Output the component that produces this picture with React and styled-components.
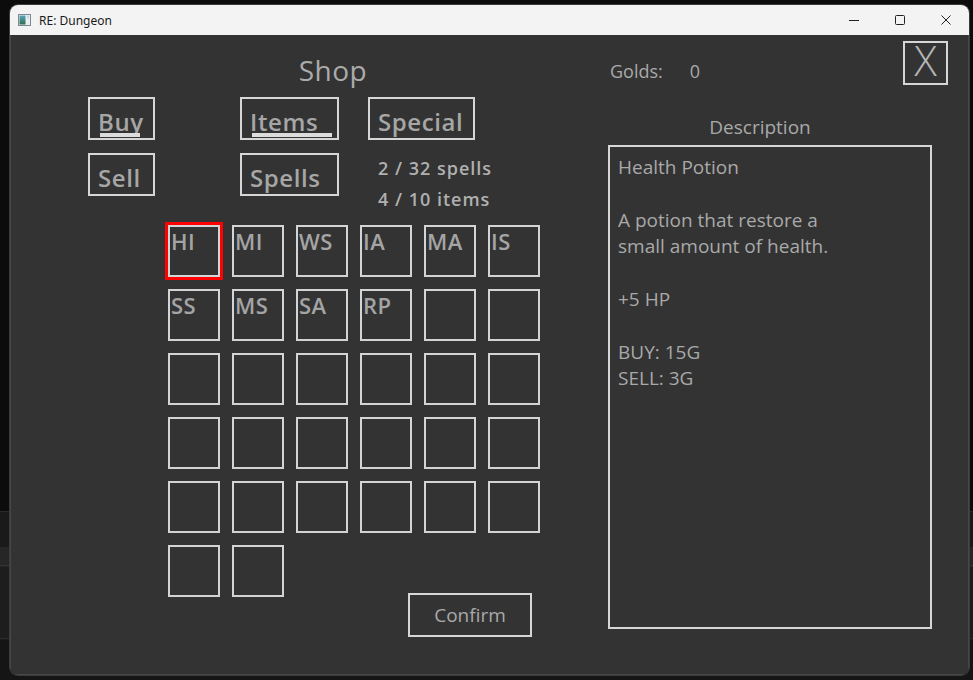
import React from 'react';
import styled, { createGlobalStyle, css } from 'styled-components';

const GlobalStyle = createGlobalStyle`
  html, body {
    margin: 0;
    padding: 0;
  }
  body {
    font-family: "Open Sans", "Noto Sans", sans-serif;
    background: linear-gradient(
      to bottom,
      #0c0c0c 0px,
      #0c0c0c 511px,
      #3a3a3a 511px,
      #1a1a1a 512px,
      #1a1a1a 547px,
      #262626 547px,
      #262626 565px,
      #3a3a3a 565px,
      #1d1d1d 567px,
      #1d1d1d 638px,
      #333 638px,
      #151515 640px
    );
  }
`;

const Screen = styled.div`
  width: 973px;
  height: 680px;
  box-sizing: border-box;
  padding: 5px 4px 5px 10px;
`;

const Window = styled.div`
  width: 959px;
  height: 670px;
  display: flex;
  flex-direction: column;
  border-radius: 8px;
  overflow: hidden;
  box-shadow: 0 0 0 1px #3c3c3c;
`;

const TitleBar = styled.div`
  height: 30px;
  flex: none;
  display: flex;
  align-items: center;
  background: #f3f3f3;
  padding-left: 8px;
`;

const WindowTitle = styled.span`
  margin-left: 8px;
  font-family: "Noto Sans", "Liberation Sans", sans-serif;
  font-size: 12px;
  color: #1a1a1a;
`;

const CaptionButtons = styled.div`
  margin-left: auto;
  display: flex;
`;

const CaptionButton = styled.div`
  width: 46px;
  height: 30px;
  display: flex;
  align-items: center;
  justify-content: center;
`;

const Body = styled.div`
  flex: 1;
  position: relative;
  display: flex;
  background: #333333;
  padding-left: 78px;
  color: #a9a9a9;
  box-shadow: inset 1px 0 0 #474747, inset -1px 0 0 #474747, inset 0 -1px 0 #474747;
`;

const LeftPane = styled.div`
  width: 510px;
  display: flex;
  flex-direction: column;
`;

const Title = styled.div`
  width: 490px;
  margin-top: 16px;
  font-size: 28px;
  line-height: 38px;
  text-align: center;
  letter-spacing: 0.5px;
  color: #ababab;
`;

const Tabs = styled.div`
  margin-top: 8px;
  display: grid;
  grid-template-columns: 152px 128px 1fr;
  grid-template-rows: 43px 43px;
  row-gap: 13px;
`;

const TabButton = styled.div`
  position: relative;
  box-sizing: border-box;
  width: ${(p) => p.$width}px;
  height: 43px;
  border: 2px solid #d6d6d6;
  padding: 7px 0 0 8px;
  font-size: 24px;
  font-weight: 600;
  letter-spacing: 0.6px;
  line-height: 32px;
  color: #a6a6a6;
  ${(p) =>
    p.$underline &&
    css`
      &::after {
        content: '';
        position: absolute;
        left: 10px;
        top: 34px;
        width: ${p.$underline}px;
        height: 4px;
        background: #dcdcdc;
      }
    `}
`;

const Stats = styled.div`
  grid-column: 3;
  grid-row: 2;
  padding-left: 10px;
  font-size: 18px;
  font-weight: 600;
  letter-spacing: 1px;
  line-height: 31px;
  color: #b0b0b0;
`;

const ItemGrid = styled.div`
  margin-top: 29px;
  margin-left: 80px;
  display: grid;
  grid-template-columns: repeat(6, 52px);
  grid-auto-rows: 52px;
  gap: 12px;
`;

const Cell = styled.div`
  box-sizing: border-box;
  border: 2px solid #d4d4d4;
  padding: 3px 0 0 1px;
  font-size: 22px;
  font-weight: 560;
  letter-spacing: 0.5px;
  line-height: 22px;
  color: #a4a4a4;
  ${(p) =>
    p.$selected &&
    css`
      outline: 3px solid #ff0000;
    `}
`;

const ConfirmButton = styled.div`
  grid-row: 6;
  grid-column: 4 / span 3;
  align-self: start;
  justify-self: start;
  margin: 48px 0 0 48px;
  box-sizing: border-box;
  width: 124px;
  height: 44px;
  border: 2px solid #d6d6d6;
  display: flex;
  align-items: center;
  justify-content: center;
  font-size: 19px;
  color: #a9a9a9;
`;

const RightPane = styled.div`
  width: 324px;
  margin-left: 10px;
  padding-top: 24px;
  display: flex;
  flex-direction: column;
`;

const GoldRow = styled.div`
  display: flex;
  gap: 27px;
  padding-left: 2px;
  font-size: 18px;
  line-height: 24px;
`;

const DescLabel = styled.div`
  width: 304px;
  margin-top: 32px;
  font-size: 19px;
  line-height: 24px;
  text-align: center;
`;

const DescBox = styled.div`
  margin-top: 6px;
  box-sizing: border-box;
  height: 484px;
  border: 2px solid #d6d6d6;
  padding: 7px 8px;
  font-size: 19px;
  line-height: 26.4px;
  white-space: pre-line;
`;

const CloseButton = styled.div`
  position: absolute;
  top: 6px;
  right: 21px;
  box-sizing: border-box;
  width: 45px;
  height: 44px;
  border: 2px solid #d6d6d6;
  display: flex;
  align-items: center;
  justify-content: center;
  padding-bottom: 6px;
  font-size: 42px;
  font-weight: 300;
  line-height: 1;
  color: #b4b4b4;
`;

const AppIcon = () => (
  <svg width="13" height="12" viewBox="0 0 13 12">
    <defs>
      <linearGradient id="ic" x1="0" y1="0" x2="0" y2="1">
        <stop offset="0" stopColor="#5aa6b8" />
        <stop offset="1" stopColor="#2f6e4e" />
      </linearGradient>
    </defs>
    <rect x="0.5" y="0.5" width="12" height="11" fill="#e8eef2" stroke="#7c8a94" />
    <rect x="1.5" y="1.5" width="6" height="9" fill="url(#ic)" />
    <rect x="9" y="1.5" width="2" height="3" fill="#cfd8dd" />
  </svg>
);

const cells = ['HI', 'MI', 'WS', 'IA', 'MA', 'IS', 'SS', 'MS', 'SA', 'RP'];
const totalCells = 32;

const description = `Health Potion

A potion that restore a
small amount of health.

+5 HP

BUY: 15G
SELL: 3G`;

export default function App() {
  const slots = Array.from({ length: totalCells }, (_, i) => cells[i] || '');
  return (
    <Screen>
      <GlobalStyle />
      <Window>
        <TitleBar>
          <AppIcon />
          <WindowTitle>RE: Dungeon</WindowTitle>
          <CaptionButtons>
            <CaptionButton>
              <svg width="10" height="10" viewBox="0 0 10 10">
                <path d="M0 5.5h10" stroke="#222" strokeWidth="1" />
              </svg>
            </CaptionButton>
            <CaptionButton>
              <svg width="10" height="10" viewBox="0 0 10 10">
                <rect x="0.5" y="0.5" width="9" height="9" rx="1" fill="none" stroke="#222" />
              </svg>
            </CaptionButton>
            <CaptionButton>
              <svg width="10" height="10" viewBox="0 0 10 10">
                <path d="M0.5 0.5l9 9M9.5 0.5l-9 9" stroke="#222" strokeWidth="1" />
              </svg>
            </CaptionButton>
          </CaptionButtons>
        </TitleBar>
        <Body>
          <LeftPane>
            <Title>Shop</Title>
            <Tabs>
              <TabButton $width={67} $underline={40}>Buy</TabButton>
              <TabButton $width={99} $underline={80}>Items</TabButton>
              <TabButton $width={107}>Special</TabButton>
              <TabButton $width={67}>Sell</TabButton>
              <TabButton $width={99}>Spells</TabButton>
              <Stats>
                2 / 32 spells
                <br />
                4 / 10 items
              </Stats>
            </Tabs>
            <ItemGrid>
              {slots.map((label, i) => (
                <Cell key={i} $selected={i === 0}>
                  {label}
                </Cell>
              ))}
              <ConfirmButton>Confirm</ConfirmButton>
            </ItemGrid>
          </LeftPane>
          <RightPane>
            <GoldRow>
              <span>Golds:</span>
              <span>0</span>
            </GoldRow>
            <DescLabel>Description</DescLabel>
            <DescBox>{description}</DescBox>
          </RightPane>
          <CloseButton>X</CloseButton>
        </Body>
      </Window>
    </Screen>
  );
}
